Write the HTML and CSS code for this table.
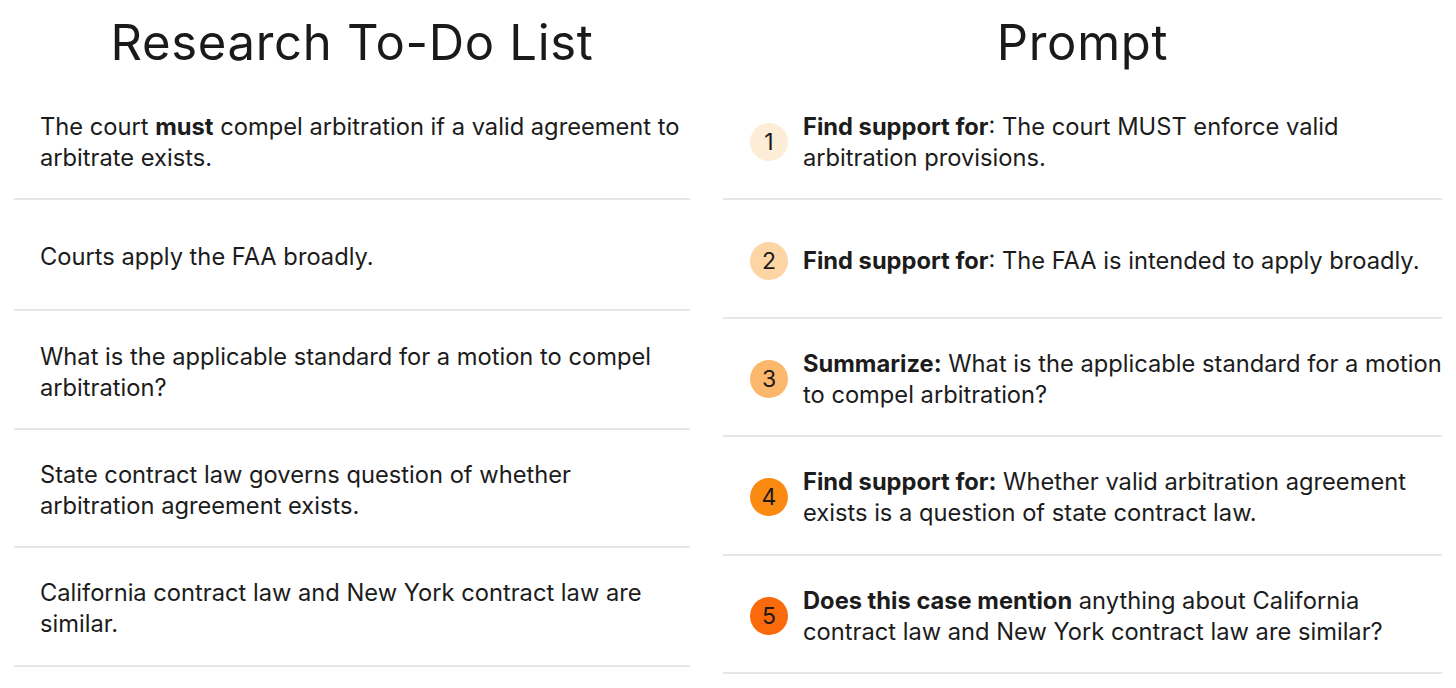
FILE: index.html
```html
<!DOCTYPE html>
<html lang="en">
<head>
<meta charset="utf-8">
<title>Research To-Do List / Prompt</title>
<link rel="stylesheet" href="styles.css">
</head>
<body>
<main class="board">
  <section class="col col-left">
    <h1 class="title">Research To-Do List</h1>
    <div class="row"><p class="text">The court <b>must</b> compel arbitration if a valid agreement to arbitrate exists.</p></div>
    <div class="row row-short"><p class="text">Courts apply the FAA broadly.</p></div>
    <div class="row"><p class="text">What is the applicable standard for a motion to compel arbitration?</p></div>
    <div class="row"><p class="text">State contract law governs question of whether arbitration agreement exists.</p></div>
    <div class="row"><p class="text">California contract law and New York contract law are similar.</p></div>
  </section>
  <section class="col col-right">
    <h1 class="title">Prompt</h1>
    <div class="row"><span class="num n1">1</span><p class="text"><b>Find support for</b>: The court MUST enforce valid arbitration provisions.</p></div>
    <div class="row"><span class="num n2">2</span><p class="text"><b>Find support for</b>: The FAA is intended to apply broadly.</p></div>
    <div class="row"><span class="num n3">3</span><p class="text"><b>Summarize:</b> What is the applicable standard for a motion to compel arbitration?</p></div>
    <div class="row"><span class="num n4">4</span><p class="text"><b>Find support for:</b> Whether valid arbitration agreement exists is a question of state contract law.</p></div>
    <div class="row"><span class="num n5">5</span><p class="text"><b>Does this case mention</b> anything about California contract law and New York contract law are similar?</p></div>
  </section>
</main>
</body>
</html>
```

FILE: styles.css
```css
* { box-sizing: border-box; }
html, body { margin: 0; padding: 0; background: #ffffff; }
body {
  font-family: Inter, "Noto Sans", "Liberation Sans", sans-serif;
  color: #1c1c1c;
}
.board {
  display: grid;
  grid-template-columns: 676px 719px;
  column-gap: 33px;
  padding: 0 14px;
  width: 1456px;
}
.col { display: flex; flex-direction: column; }
.title {
  margin: 0;
  height: 82px;
  padding-top: 14px;
  font-size: 49px;
  line-height: 58px;
  font-weight: 400;
  text-align: center;
  color: #1a1a1a;
  letter-spacing: 0.7px;
}
.row {
  display: flex;
  align-items: center;
  height: 118.4px;
  padding-top: 4px;
  border-bottom: 2px solid #e6e6e6;
}
.row-short { height: 111px; }
.col-left .row { padding-left: 26px; }
.col-right .row { padding-left: 27px; }
.text {
  margin: 0;
  font-size: 23.7px;
  line-height: 31px;
  flex: 1;
}
.text b { font-weight: 700; }
.num {
  flex: none;
  width: 38px;
  height: 38px;
  border-radius: 50%;
  margin-right: 15px;
  display: flex;
  align-items: center;
  justify-content: center;
  font-size: 23px;
  color: #1a1a1a;
}
.n1 { background: #fdecd6; }
.n2 { background: #fdd5a4; }
.n3 { background: #fbb86c; }
.n4 { background: #fb8a12; }
.n5 { background: #fa6a0a; }
```
